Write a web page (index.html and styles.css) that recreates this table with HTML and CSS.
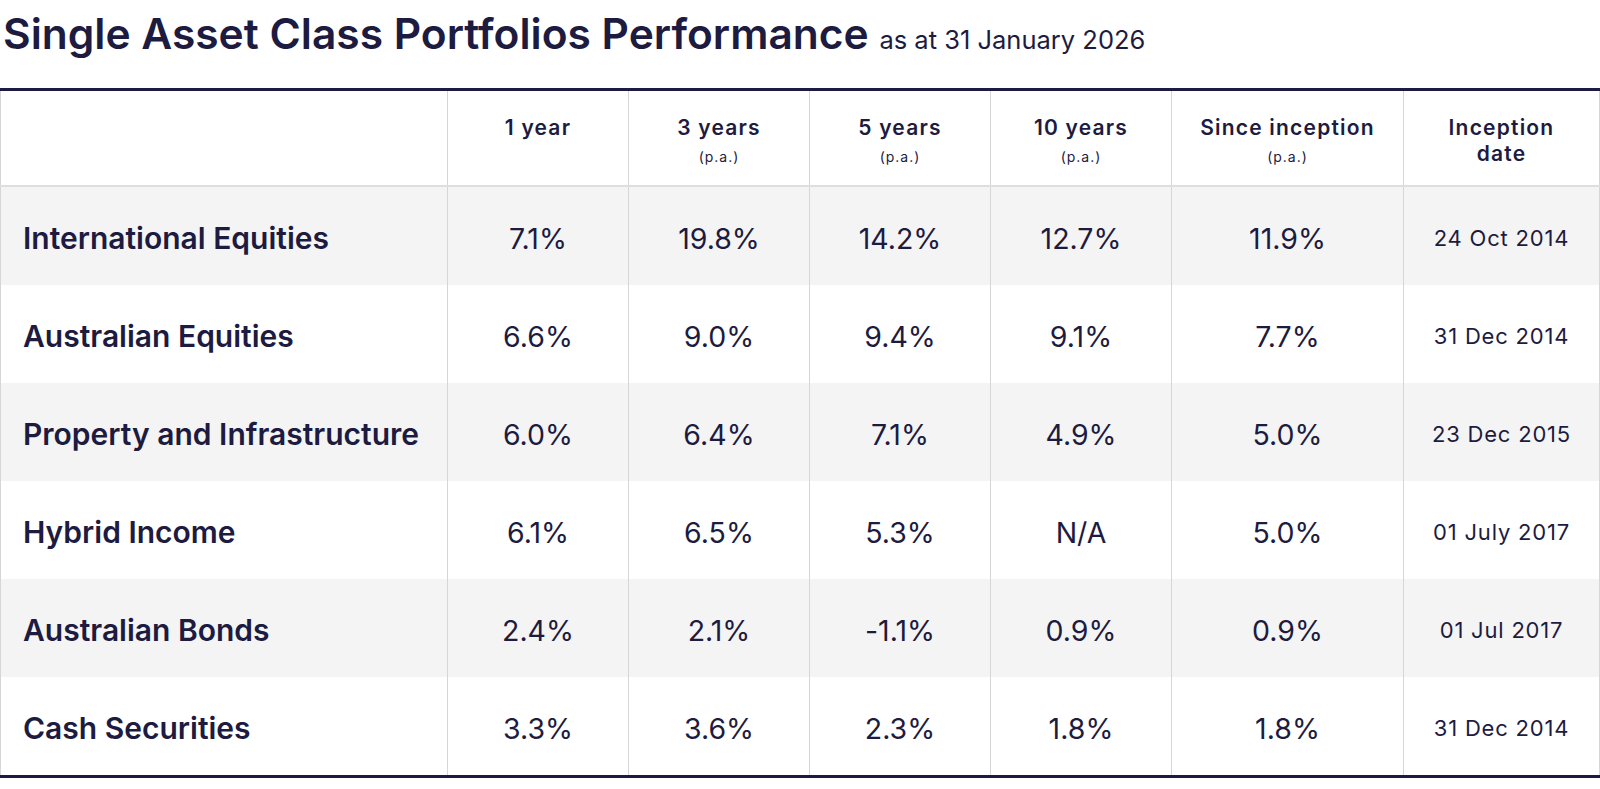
FILE: index.html
```html
<!DOCTYPE html>
<html lang="en">
<head>
<meta charset="utf-8">
<title>Single Asset Class Portfolios Performance</title>
<link rel="stylesheet" href="styles.css">
</head>
<body>
<div class="page">
  <h1 class="title">Single Asset Class Portfolios Performance <span class="subtitle">as at 31 January 2026</span></h1>
  <table class="perf">
    <colgroup>
      <col class="c-label">
      <col class="c-num">
      <col class="c-num">
      <col class="c-num">
      <col class="c-num">
      <col class="c-since">
      <col class="c-date">
    </colgroup>
    <thead>
      <tr>
        <th></th>
        <th><span class="h">1 year</span><span class="pa">&nbsp;</span></th>
        <th><span class="h">3 years</span><span class="pa">(p.a.)</span></th>
        <th><span class="h">5 years</span><span class="pa">(p.a.)</span></th>
        <th><span class="h">10 years</span><span class="pa">(p.a.)</span></th>
        <th><span class="h">Since inception</span><span class="pa">(p.a.)</span></th>
        <th><span class="h">Inception<br>date</span></th>
      </tr>
    </thead>
    <tbody>
      <tr class="alt">
        <td class="label">International Equities</td>
        <td>7.1%</td><td>19.8%</td><td>14.2%</td><td>12.7%</td><td>11.9%</td><td class="date">24 Oct 2014</td>
      </tr>
      <tr>
        <td class="label">Australian Equities</td>
        <td>6.6%</td><td>9.0%</td><td>9.4%</td><td>9.1%</td><td>7.7%</td><td class="date">31 Dec 2014</td>
      </tr>
      <tr class="alt">
        <td class="label">Property and Infrastructure</td>
        <td>6.0%</td><td>6.4%</td><td>7.1%</td><td>4.9%</td><td>5.0%</td><td class="date">23 Dec 2015</td>
      </tr>
      <tr>
        <td class="label">Hybrid Income</td>
        <td>6.1%</td><td>6.5%</td><td>5.3%</td><td>N/A</td><td>5.0%</td><td class="date">01 July 2017</td>
      </tr>
      <tr class="alt">
        <td class="label">Australian Bonds</td>
        <td>2.4%</td><td>2.1%</td><td>-1.1%</td><td>0.9%</td><td>0.9%</td><td class="date">01 Jul 2017</td>
      </tr>
      <tr>
        <td class="label">Cash Securities</td>
        <td>3.3%</td><td>3.6%</td><td>2.3%</td><td>1.8%</td><td>1.8%</td><td class="date">31 Dec 2014</td>
      </tr>
    </tbody>
  </table>
</div>
</body>
</html>
```
FILE: styles.css
```css
html, body {
  margin: 0;
  padding: 0;
  background: #ffffff;
}

body {
  font-family: "Inter", "Noto Sans", sans-serif;
  font-variant-ligatures: none;
  color: #1d1b3f;
}

.page {
  width: 1600px;
}

.title {
  margin: 0;
  padding: 9px 0 0 3px;
  height: 78px;
  box-sizing: border-box;
  font-size: 42.5px;
  line-height: 50px;
  font-weight: 600;
  letter-spacing: 0;
  color: #1d1b3f;
  white-space: nowrap;
}

.subtitle {
  font-size: 25.5px;
  font-weight: 400;
}

.perf {
  width: 1600px;
  border-collapse: collapse;
  table-layout: fixed;
  margin-top: 10px;
  border-top: 3px solid #1d1b3f;
  border-bottom: 3px solid #1d1b3f;
}

.c-label { width: 447px; }
.c-num { width: 181px; }
.c-since { width: 232px; }
.c-date { width: 196px; }

.perf th,
.perf td {
  border-left: 1px solid #d6d6d6;
  border-right: 1px solid #d6d6d6;
  text-align: center;
  padding: 0;
}

.perf thead th {
  height: 96px;
  vertical-align: top;
  padding-top: 24px;
  box-sizing: border-box;
  border-bottom: 2px solid #dedede;
  font-weight: 600;
}

.h {
  display: block;
  font-size: 21px;
  line-height: 26px;
  letter-spacing: 1.2px;
}

.pa {
  display: block;
  font-size: 14px;
  font-weight: 400;
  letter-spacing: 1px;
  line-height: 20px;
  margin-top: 6px;
}

.perf tbody td {
  height: 93px;
  padding-top: 5px;
  font-size: 28.5px;
  font-weight: 400;
  vertical-align: middle;
}

.perf tbody tr.alt td {
  background: #f4f4f4;
}

.perf tbody td.label {
  text-align: left;
  padding-left: 22px;
  font-weight: 600;
  font-size: 30px;
}

.perf tbody td.date {
  font-size: 22px;
  letter-spacing: 0.8px;
}
```
